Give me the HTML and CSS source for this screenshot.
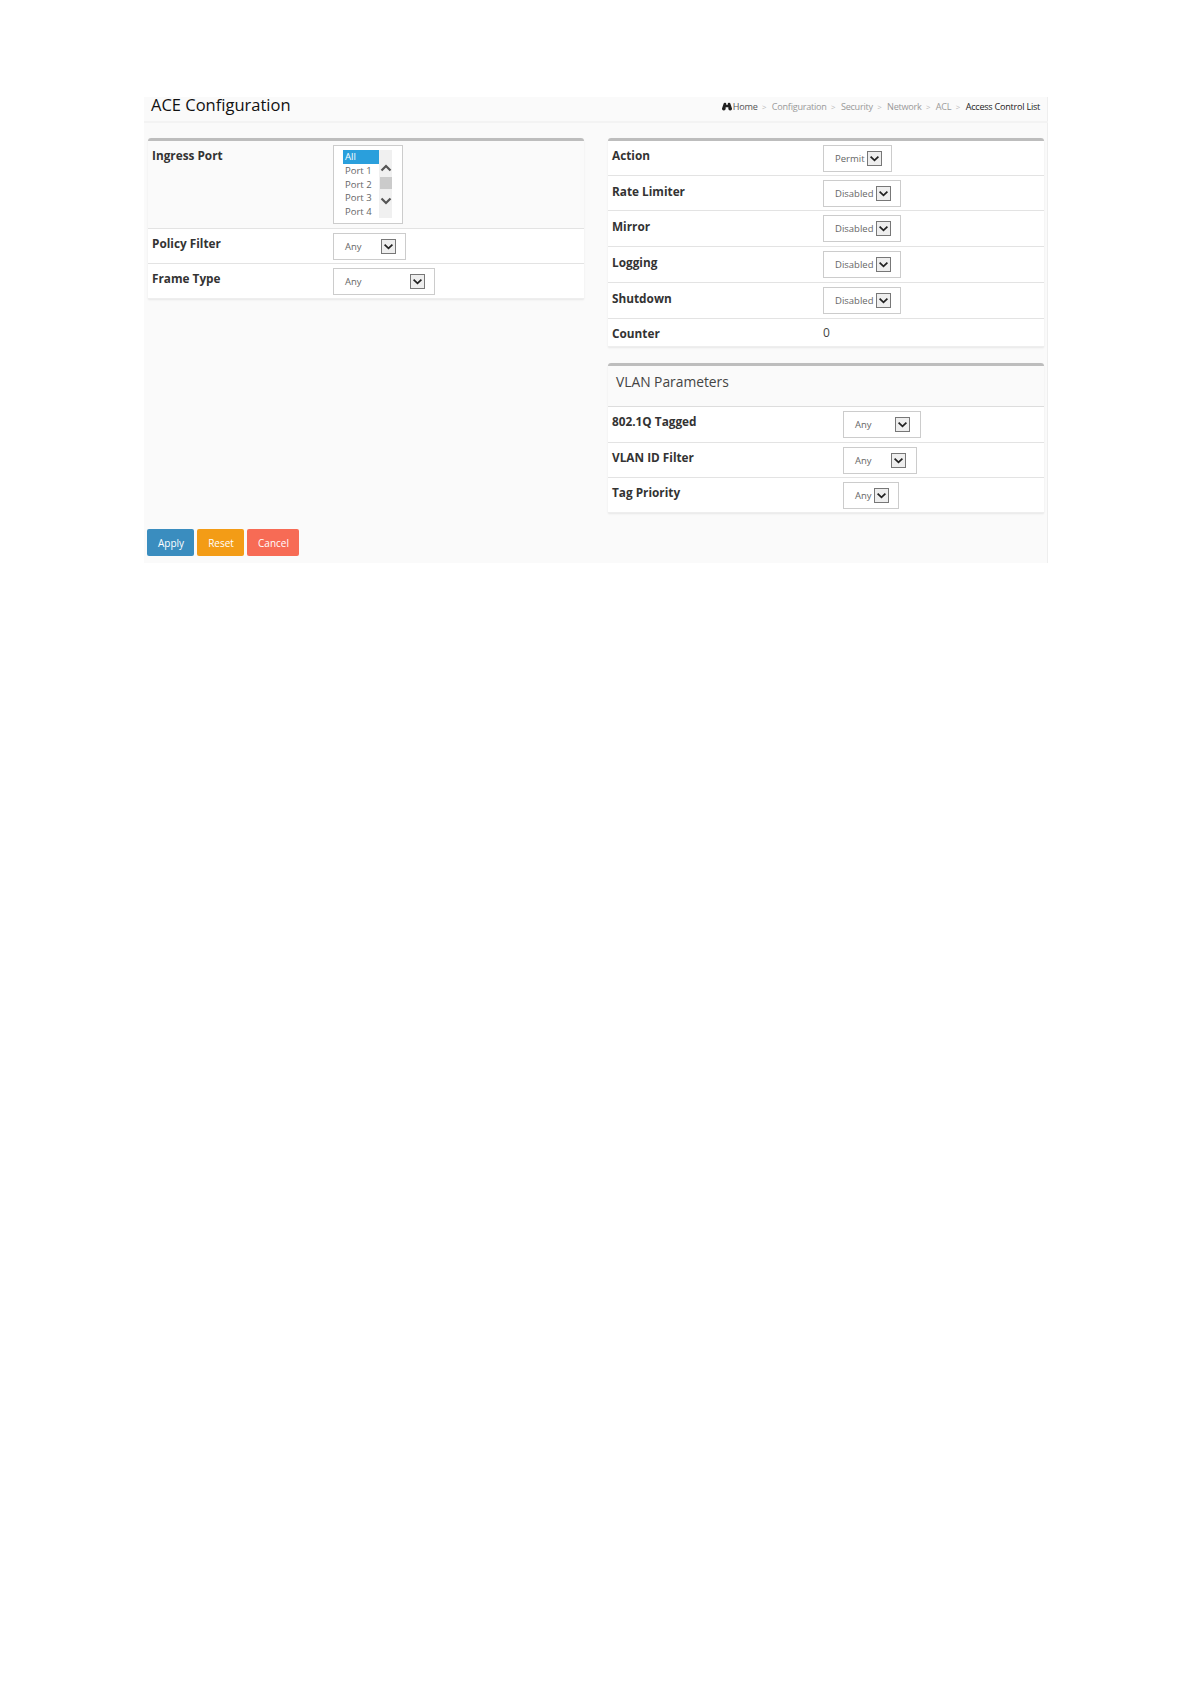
FILE: index.html
```html
<!DOCTYPE html>
<html lang="en">
<head>
<meta charset="utf-8">
<title>ACE Configuration</title>
<link rel="stylesheet" href="styles.css">
</head>
<body>
<svg class="defs" width="0" height="0" aria-hidden="true"><defs>
  <symbol id="chev" viewBox="0 0 15 15"><path d="M3 5.2 7.5 9.6 12 5.2" fill="none" stroke="#222" stroke-width="2"/></symbol>
</defs></svg>
<main class="page">
  <header class="topbar">
    <h1 class="title">ACE Configuration</h1>
    <nav class="crumbs">
      <svg class="home" viewBox="0 0 12 10" width="10" height="9"><path d="M0 7.500 2 1.500Q2.500 0 4 .5L5 1V3H7V1L8 .5Q9.500 0 10 1.500L12 7.500A2.200 2.200 0 0 1 7.600 7.800V6H4.400V7.800A2.200 2.200 0 0 1 0 7.500Z" fill="#222"/></svg>
      <span class="c-home">Home</span><span class="sep">&gt;</span>
      <span>Configuration</span><span class="sep">&gt;</span>
      <span>Security</span><span class="sep">&gt;</span>
      <span>Network</span><span class="sep">&gt;</span>
      <span>ACL</span><span class="sep">&gt;</span>
      <span class="c-cur">Access Control List</span>
    </nav>
  </header>
  <div class="cols">
    <div class="col">
      <section class="panel">
        <div class="row row-l row-ingress">
          <div class="label">Ingress Port</div>
          <div class="listbox">
            <div class="options">
              <div class="opt opt-on">All</div>
              <div class="opt">Port 1</div>
              <div class="opt">Port 2</div>
              <div class="opt">Port 3</div>
              <div class="opt">Port 4</div>
            </div>
            <div class="scroll">
              <svg class="sb-arrow" viewBox="0 0 12 8" width="12" height="8"><path d="M1.500 6.500 6 2 10.500 6.500" fill="none" stroke="#555" stroke-width="2.200"/></svg>
              <div class="thumb"></div>
              <svg class="sb-arrow" viewBox="0 0 12 8" width="12" height="8"><path d="M1.500 1.500 6 6 10.500 1.500" fill="none" stroke="#555" stroke-width="2.200"/></svg>
            </div>
          </div>
        </div>
        <div class="row row-l row-35">
          <div class="label">Policy Filter</div>
          <div class="select w73"><span class="val">Any</span><svg class="arrow"><use href="#chev"/></svg></div>
        </div>
        <div class="row row-l row-35 row-last">
          <div class="label">Frame Type</div>
          <div class="select w102"><span class="val">Any</span><svg class="arrow"><use href="#chev"/></svg></div>
        </div>
      </section>
    </div>
    <div class="col">
      <section class="panel panel-a">
        <div class="row row-r row-35">
          <div class="label label-first">Action</div>
          <div class="select w69"><span class="val">Permit</span><svg class="arrow"><use href="#chev"/></svg></div>
        </div>
        <div class="row row-r row-35">
          <div class="label">Rate Limiter</div>
          <div class="select w78"><span class="val">Disabled</span><svg class="arrow"><use href="#chev"/></svg></div>
        </div>
        <div class="row row-r row-36">
          <div class="label">Mirror</div>
          <div class="select w78"><span class="val">Disabled</span><svg class="arrow"><use href="#chev"/></svg></div>
        </div>
        <div class="row row-r row-36">
          <div class="label">Logging</div>
          <div class="select w78"><span class="val">Disabled</span><svg class="arrow"><use href="#chev"/></svg></div>
        </div>
        <div class="row row-r row-36">
          <div class="label">Shutdown</div>
          <div class="select w78"><span class="val">Disabled</span><svg class="arrow"><use href="#chev"/></svg></div>
        </div>
        <div class="row row-r row-counter row-last">
          <div class="label">Counter</div>
          <div class="count">0</div>
        </div>
      </section>
      <section class="panel panel-b">
        <h2 class="panel-head">VLAN Parameters</h2>
        <div class="row row-v row-36">
          <div class="label">802.1Q Tagged</div>
          <div class="select w78"><span class="val">Any</span><svg class="arrow arrow-v"><use href="#chev"/></svg></div>
        </div>
        <div class="row row-v row-35">
          <div class="label">VLAN ID Filter</div>
          <div class="select w74"><span class="val">Any</span><svg class="arrow arrow-v"><use href="#chev"/></svg></div>
        </div>
        <div class="row row-v row-35 row-last">
          <div class="label">Tag Priority</div>
          <div class="select w56"><span class="val">Any</span><svg class="arrow arrow-tag"><use href="#chev"/></svg></div>
        </div>
      </section>
    </div>
  </div>
  <div class="actions">
    <button class="btn btn-apply" type="button">Apply</button>
    <button class="btn btn-reset" type="button">Reset</button>
    <button class="btn btn-cancel" type="button">Cancel</button>
  </div>
</main>
</body>
</html>
```
FILE: styles.css
```css
* { box-sizing: border-box; }
html, body { margin: 0; background: #fff; }
body {
  min-height: 1684px;
  padding: 97px 143px 0 144px;
  font-family: "Open Sans", "Liberation Sans", sans-serif;
  color: #333;
}
.defs { position: absolute; }
.page {
  width: 904px;
  height: 466px;
  background: #fafafa;
  border-right: 1px solid #eee;
  padding: 0 0 0 4px;
}
.topbar {
  display: flex;
  justify-content: space-between;
  align-items: flex-start;
  height: 26px;
  margin: 0 -1px 0 -4px;
  padding: 0 8px 0 7px;
  border-bottom: 2px solid #f3f3f3;
}
.title { margin: 0; font-size: 16.500px; font-weight: 400; color: #111; line-height: 15px; }
.crumbs { display: flex; align-items: center; padding-top: 3px; font-size: 9.100px; line-height: 13px; color: #999; letter-spacing: -0.250px; }
.crumbs .sep { margin: 0 5.500px 0 4.500px; color: #bbb; font-size: 8px; }
.home { margin-right: 1px; }
.c-home { color: #555; }
.c-cur { color: #222; }
.cols { display: flex; gap: 24px; padding-top: 15px; }
.col { width: 436px; flex: none; }
.panel {
  border-top: 3px solid #bdbdbd;
  border-radius: 3px 3px 0 0;
  box-shadow: 0 1px 2px rgba(0,0,0,.08);
}
.panel-b { margin-top: 16px; }
.panel-head {
  margin: 0;
  height: 41px;
  padding: 6px 0 0 8px;
  font-size: 13.800px;
  font-weight: 400;
  line-height: 19px;
  color: #444;
  background: #fafafa;
  border-bottom: 1px solid #ddd;
}
.row {
  display: flex;
  align-items: flex-start;
  background: #fff;
  border-bottom: 1px solid #e3e3e3;
}
.row-last { border-bottom-color: #eee; }
.row-l, .row-r, .row-v { padding-left: 4px; }
.row-35 { height: 35px; padding-top: 4px; }
.row-36 { height: 36px; padding-top: 4px; }
.row-ingress { height: 88px; padding-top: 4px; background: #fafafa; }
.row-counter { height: 28px; align-items: center; }
.label { font-size: 11.800px; font-weight: 700; color: #333; line-height: 16px; padding-top: 2px; flex: none; }
.row-l .label { width: 181px; }
.row-r .label { width: 211px; padding-top: 2.500px; }
.row-v .label { width: 231px; }
.row-r .label-first { padding-top: 2px; }
.row-counter .label { padding-top: 0; }
.count { font-size: 12px; color: #444; }
.select {
  display: flex;
  align-items: center;
  height: 27px;
  padding-left: 11px;
  background: #fff;
  border: 1px solid #ccc;
}
.w56 { width: 56px; }
.w69 { width: 69px; }
.w73 { width: 73px; }
.w74 { width: 74px; }
.w78 { width: 78px; }
.w102 { width: 102px; }
.val { font-size: 9.500px; color: #666; }
.arrow {
  width: 15px;
  height: 15px;
  margin-left: auto;
  margin-right: 9px;
  background: #eee;
  border: 1px solid #777;
  flex: none;
}
.arrow-v { margin-right: 10px; }
.arrow-tag { margin-right: 9px; }
.listbox {
  display: flex;
  align-items: flex-start;
  width: 70px;
  height: 79px;
  padding: 4px 0 0 9px;
  background: #fff;
  border: 1px solid #ccc;
}
.options { width: 36px; }
.opt { height: 13.500px; line-height: 13.500px; padding-left: 2px; font-size: 9.500px; color: #666; }
.opt-on { height: 14px; background: #2a9fdc; color: #fff; }
.scroll {
  width: 13px;
  height: 68px;
  background: #f0f0f0;
  display: flex;
  flex-direction: column;
  align-items: center;
  padding-top: 14px;
}
.thumb { width: 12px; height: 12px; margin: 5px 0 8px; background: #cbcbcb; }
.sb-arrow { flex: none; }
.actions { display: flex; gap: 3px; margin-left: -1px; padding-top: 16px; }
.btn {
  height: 27px;
  padding: 0 0 0 1px;
  border: 0;
  border-radius: 2px;
  color: #fff;
  font: 400 10px "Open Sans", sans-serif;
}
.btn-apply { width: 47px; background: #3a8dbf; }
.btn-reset { width: 47px; background: #f39c16; }
.btn-cancel { width: 52px; background: #f76b55; }
```
